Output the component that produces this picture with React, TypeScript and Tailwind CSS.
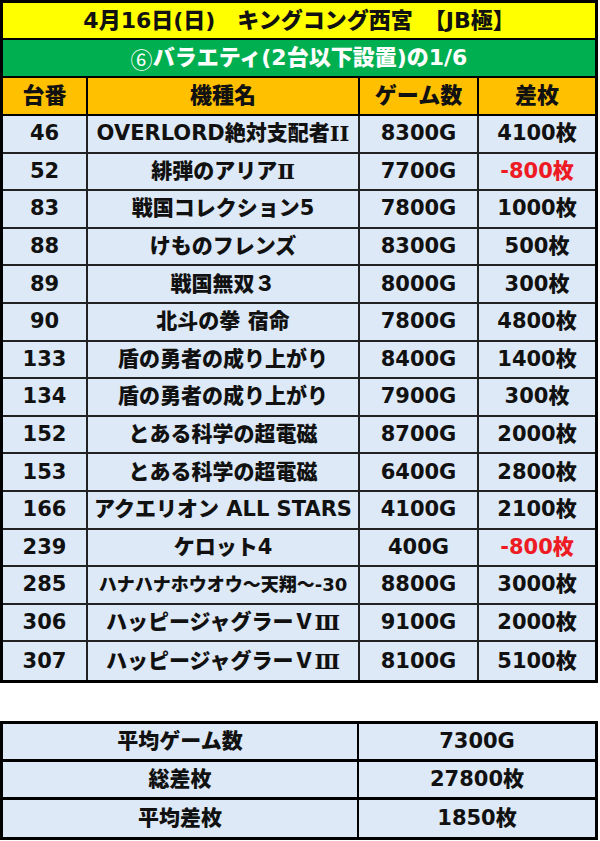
import React from "react";

type Row = {
  no: string;
  name: React.ReactNode;
  games: string;
  diff: string;
  small?: boolean;
};

const Roman = ({ children }: { children: React.ReactNode }) => (
  <span style={{ fontFamily: '"DejaVu Serif", serif' }}>{children}</span>
);

const rows: Row[] = [
  { no: "46", name: <>OVERLORD絶対支配者<Roman>II</Roman></>, games: "8300G", diff: "4100枚" },
  { no: "52", name: <>緋弾のアリア<Roman>Ⅱ</Roman></>, games: "7700G", diff: "-800枚" },
  { no: "83", name: "戦国コレクション5", games: "7800G", diff: "1000枚" },
  { no: "88", name: "けものフレンズ", games: "8300G", diff: "500枚" },
  { no: "89", name: "戦国無双３", games: "8000G", diff: "300枚" },
  { no: "90", name: "北斗の拳 宿命", games: "7800G", diff: "4800枚" },
  { no: "133", name: "盾の勇者の成り上がり", games: "8400G", diff: "1400枚" },
  { no: "134", name: "盾の勇者の成り上がり", games: "7900G", diff: "300枚" },
  { no: "152", name: "とある科学の超電磁", games: "8700G", diff: "2000枚" },
  { no: "153", name: "とある科学の超電磁", games: "6400G", diff: "2800枚" },
  { no: "166", name: "アクエリオン ALL STARS", games: "4100G", diff: "2100枚" },
  { no: "239", name: "ケロット4", games: "400G", diff: "-800枚" },
  { no: "285", name: "ハナハナホウオウ～天翔～-30", games: "8800G", diff: "3000枚", small: true },
  { no: "306", name: <>ハッピージャグラーＶ<Roman>Ⅲ</Roman></>, games: "9100G", diff: "2000枚" },
  { no: "307", name: <>ハッピージャグラーＶ<Roman>Ⅲ</Roman></>, games: "8100G", diff: "5100枚" },
];

const summary = [
  { label: "平均ゲーム数", value: "7300G", h: "h-[38px]" },
  { label: "総差枚", value: "27800枚", h: "h-[38px]" },
  { label: "平均差枚", value: "1850枚", h: "h-[37px]" },
];

const font = { fontFamily: '"DejaVu Sans", "Noto Sans CJK JP", sans-serif' };

export default function App() {
  return (
    <div className="w-[600px] min-h-[841px] bg-white font-black text-[#111] leading-none" style={font}>
      <div className="w-[598px] border-[3px] border-black">
        <div className="h-[37px] bg-[#ffff00] border-b-2 border-black flex items-center justify-center text-[22px]">
          4月16日(日)　キングコング西宮　【JB極】
        </div>
        <div className="h-[38px] bg-[#00b050] border-b-2 border-black flex items-center justify-center text-[22px] text-white">
          <span className="font-normal" style={{ fontFamily: '"Noto Sans CJK JP", sans-serif' }}>
            ⑥
          </span>
          バラエティ(2台以下設置)の1/6
        </div>
        <div className="h-[38px] bg-[#ffc000] border-b-2 border-black flex text-[22px]">
          <div className="w-[85px] border-r-2 border-black flex items-center justify-center">台番</div>
          <div className="w-[272px] border-r-2 border-black flex items-center justify-center">機種名</div>
          <div className="w-[119px] border-r-2 border-black flex items-center justify-center">ゲーム数</div>
          <div className="flex-1 flex items-center justify-center">差枚</div>
        </div>
        {rows.map((r, i) => (
          <div
            key={i}
            className={
              "h-[37.6px] bg-[#dde9f6] flex text-[21px] " +
              (i < rows.length - 1 ? "border-b-2 border-[#222]" : "")
            }
          >
            <div className="w-[85px] border-r-2 border-[#222] flex items-center justify-center">{r.no}</div>
            <div
              className={
                "w-[272px] border-r-2 border-[#222] flex items-center justify-center whitespace-nowrap " +
                (r.small ? "text-[18px]" : "")
              }
            >
              {r.name}
            </div>
            <div className="w-[119px] border-r-2 border-[#222] flex items-center justify-center">{r.games}</div>
            <div
              className={
                "flex-1 flex items-center justify-center " + (r.diff.startsWith("-") ? "text-[#ee1b24]" : "")
              }
            >
              {r.diff}
            </div>
          </div>
        ))}
      </div>

      <div className="mt-[38px] w-[598px] border-[3px] border-black">
        {summary.map((s, i) => (
          <div
            key={i}
            className={
              s.h + " bg-[#dde9f6] flex text-[21px] " + (i < summary.length - 1 ? "border-b-[3px] border-black" : "")
            }
          >
            <div className="w-[356px] border-r-2 border-black flex items-center justify-center">{s.label}</div>
            <div className="flex-1 flex items-center justify-center">{s.value}</div>
          </div>
        ))}
      </div>
    </div>
  );
}
